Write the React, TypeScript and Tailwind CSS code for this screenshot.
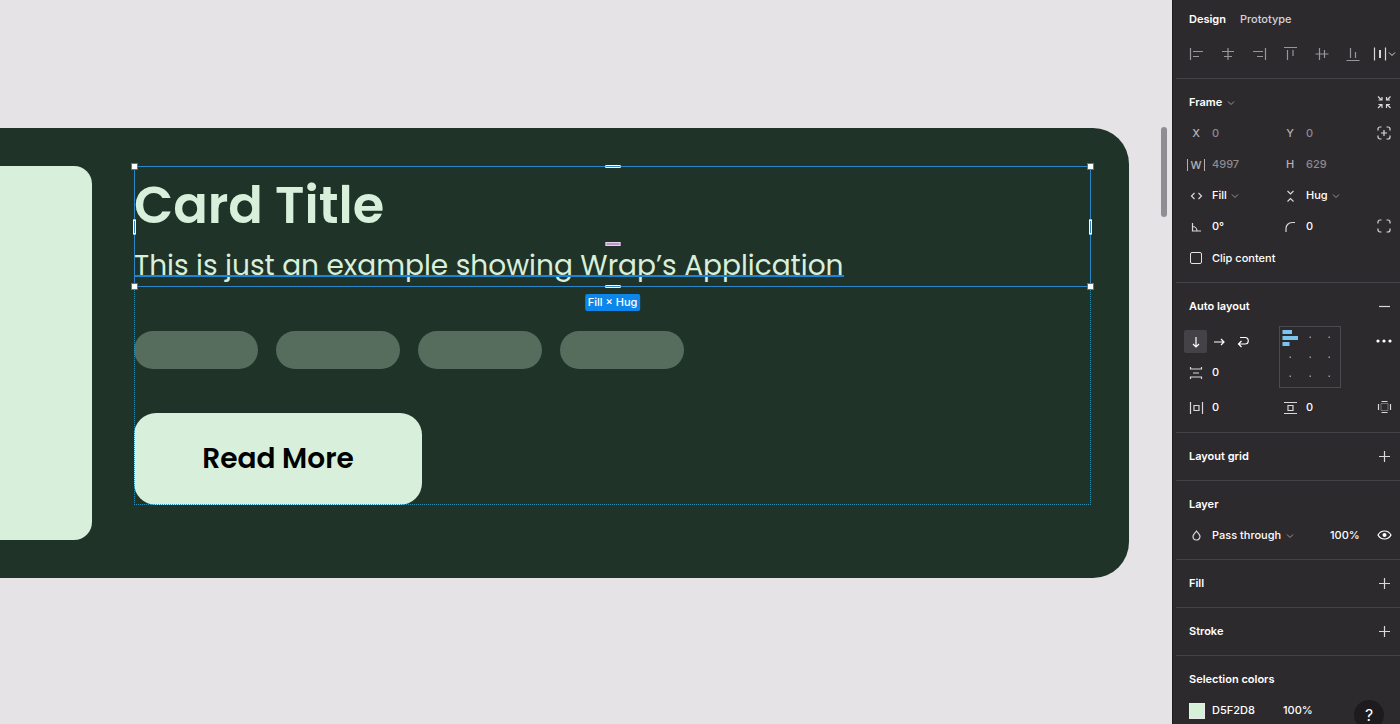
import type { ReactNode } from 'react';

interface IconProps {
  children: ReactNode;
  className?: string;
}

function Icon({ children, className = 'text-[#d9d7da]' }: IconProps) {
  return (
    <svg
      viewBox="0 0 16 16"
      width="16"
      height="16"
      fill="none"
      stroke="currentColor"
      strokeWidth="1.2"
      className={`shrink-0 ${className}`}
      aria-hidden="true"
    >
      {children}
    </svg>
  );
}

function Chevron({ className = 'text-[#98969a]' }: { className?: string }) {
  return (
    <svg
      viewBox="0 0 8 6"
      width="8"
      height="6"
      fill="none"
      stroke="currentColor"
      className={`shrink-0 pointer-events-none ${className}`}
      aria-hidden="true"
    >
      <path d="M1 1.5l3 3 3-3" />
    </svg>
  );
}

const alignments = [
  { label: 'Align left', path: 'M1.5 2v12M4 5.5h10M4 10.5h6' },
  { label: 'Align horizontal centers', path: 'M8 2v12M2 5.5h12M4 10.5h8' },
  { label: 'Align right', path: 'M14.5 2v12M2 5.5h10M6 10.5h6' },
  { label: 'Align top', path: 'M2 1.5h13M5.5 4v10M11 4v6' },
  { label: 'Align vertical centers', path: 'M1.500 8h13M5.500 2v12M10.500 4v8' },
  { label: 'Align bottom', path: 'M1.5 14.5h13M5.5 2v10M10.5 6v6' },
];

const brackets =
  'M2 5.5V4a2 2 0 0 1 2-2h1.5M10.5 2H12a2 2 0 0 1 2 2v1.5M14 10.5V12a2 2 0 0 1-2 2h-1.5M5.5 14H4a2 2 0 0 1-2-2v-1.5';

function Section({ children, className = 'pb-2' }: { children: ReactNode; className?: string }) {
  return (
    <section className={`border-b border-[#444246] pt-2 ${className}`}>
      {children}
    </section>
  );
}

function Row({ children }: { children: ReactNode }) {
  return <div className="grid grid-cols-[94px_1fr_32px] items-center pl-2">{children}</div>;
}

function Heading({ title, action }: { title: string; action?: ReactNode }) {
  return (
    <div className="flex h-[31px] items-center pl-[13px]">
      <h2 className="flex-1 font-semibold">{title}</h2>
      {action}
    </div>
  );
}

function IconButton({ label, children }: { label: string; children: ReactNode }) {
  return (
    <button type="button" aria-label={label} className="flex h-6 w-8 shrink-0 items-center justify-center pb-px">
      {children}
    </button>
  );
}

function AddButton({ label }: { label: string }) {
  return (
    <IconButton label={label}>
      <Icon>
        <path d="M8.5 3v11M3 8.5h11" />
      </Icon>
    </IconButton>
  );
}

interface FieldProps {
  label: string;
  icon: ReactNode;
  value: string;
  muted?: boolean;
}

function Field({ label, icon, value, muted }: FieldProps) {
  return (
    <label className="flex h-[31px] min-w-0 items-center gap-1">
      <span className="flex w-6 shrink-0 items-center justify-center text-[#b3b1b4]">{icon}</span>
      <input
        aria-label={label}
        defaultValue={value}
        className={`w-full min-w-0 bg-transparent outline-none ${muted ? 'text-[#8d8b8f]' : 'text-white'}`}
      />
    </label>
  );
}

function Dropdown({ label, icon, value }: Omit<FieldProps, 'muted'>) {
  return (
    <label className="flex h-[31px] flex-1 items-center gap-1">
      <span className="flex w-6 shrink-0 items-center justify-center">{icon}</span>
      <select aria-label={label} className="appearance-none bg-transparent outline-none">
        <option>{value}</option>
      </select>
      <Chevron />
    </label>
  );
}

function AlignmentGrid() {
  return (
    <svg viewBox="0 0 62 62" width="62" height="62" className="ml-px shrink-0" role="img" aria-label="Alignment">
      <rect x="0.5" y="0.5" width="61" height="61" fill="none" stroke="#4c4a4e" />
      {[11, 31, 50].map((y) =>
        [11, 31, 50].map((x) =>
          x === 11 && y === 11 ? null : (
            <rect key={`${x}-${y}`} x={x - 0.5} y={y - 0.5} width="1.5" height="1.5" fill="#98969a" />
          )
        )
      )}
      <path d="M3.5 4H13v4H3.5zM3.5 10H19v4H3.5zM3.5 16h7v4h-7z" fill="#7cc4f0" />
    </svg>
  );
}

function DesignPanel() {
  return (
    <aside className="relative w-[228px] shrink-0 overflow-hidden border-l border-[#1d1b1e] bg-[#2d2a2e] pl-[3px] font-['Inter',sans-serif] text-[11px] font-medium text-white">
      <div className="border-b border-[#444246] pb-2">
        <nav className="flex h-[38px] items-center gap-3.5 pl-[13px]">
          <a href="#design" className="font-semibold">Design</a>
          <a href="#prototype" className="text-[#d5d3d6]">Prototype</a>
        </nav>
        <div className="grid h-8 grid-cols-7 items-center pl-[5px]">
          {alignments.map((item) => (
            <button key={item.label} type="button" aria-label={item.label} className="flex justify-center">
              <Icon className="text-[#98969a]">
                <path d={item.path} />
              </Icon>
            </button>
          ))}
          <button type="button" aria-label="Distribute" className="flex items-center justify-center">
            <Icon>
              <path d="M2.5 1.5v13M13.5 1.5v13" />
              <path d="M8 4v8" strokeWidth="2" />
            </Icon>
            <Chevron className="text-[#d9d7da]" />
          </button>
        </div>
      </div>

      {/* Frame */}
      <Section className="pb-[9px]">
        <div className="flex h-[31px] items-center pl-[13px]">
          <select aria-label="Node type" className="appearance-none bg-transparent font-semibold outline-none">
            <option>Frame</option>
          </select>
          <span className="flex-1 pl-1">
            <Chevron />
          </span>
          <IconButton label="Resize to fit">
            <Icon>
              <path d="M2 2.500l3.500 3.500M6 3v3H2.500M14.500 2.500L11 6M10.500 3v3H14M2 14l3.500-3.500M6 14v-3.500H2.500M14.500 14L11 10.500M10.500 14v-3.500H14" />
            </Icon>
          </IconButton>
        </div>
        <Row>
          <Field label="X position" icon="X" value="0" muted />
          <Field label="Y position" icon="Y" value="0" muted />
          <IconButton label="Absolute position">
            <Icon>
              <path d={brackets} />
              <path d="M8 5v6M5 8h6" />
            </Icon>
          </IconButton>
        </Row>
        <Row>
          <Field
            label="Width"
            icon={<span className="border-x border-[#b3b1b4] px-0.5 leading-3">W</span>}
            value="4997"
            muted
          />
          <Field label="Height" icon="H" value="629" muted />
        </Row>
        <Row>
          <Dropdown
            label="Horizontal resizing"
            icon={<Icon><path d="M6.5 5l-3 3 3 3M10.5 5l3 3-3 3" /></Icon>}
            value="Fill"
          />
          <Dropdown
            label="Vertical resizing"
            icon={<Icon><path d="M5.5 3l3 3 3-3M5.5 13.5l3-3 3 3" /></Icon>}
            value="Hug"
          />
        </Row>
        <Row>
          <Field
            label="Rotation"
            icon={<Icon><path d="M4.5 4v8H13M4.5 7.5A4.500 4.500 0 0 1 9 12" /></Icon>}
            value="0°"
          />
          <Field
            label="Corner radius"
            icon={<Icon><path d="M4 13V9.5a6 6 0 0 1 6-6h3" /></Icon>}
            value="0"
          />
          <IconButton label="Independent corners">
            <Icon>
              <path d={brackets} />
            </Icon>
          </IconButton>
        </Row>
        <label className="flex h-[31px] items-center gap-1 pt-px pl-2">
          <span className="flex w-6 justify-center">
            <input type="checkbox" className="size-3 appearance-none rounded-xs border border-[#e3e1e4]" />
          </span>
          Clip content
        </label>
      </Section>

      {/* Auto layout */}
      <Section className="pb-[9px]">
        <Heading
          title="Auto layout"
          action={
            <IconButton label="Remove auto layout">
              <Icon><path d="M3 8.5h11" /></Icon>
            </IconButton>
          }
        />
        <div className="flex pt-1 pl-2">
          <div className="w-[94px]">
            <div className="flex h-[31px] items-center">
              <button type="button" aria-label="Vertical" className="flex size-[23px] items-center justify-center rounded-xs bg-[#444246]">
                <Icon className="text-white"><path d="M8 3v10M5 10l3 3 3-3" /></Icon>
              </button>
              <button type="button" aria-label="Horizontal" className="flex size-6 items-center justify-center">
                <Icon className="text-white"><path d="M3 8h10M10 5l3 3-3 3" /></Icon>
              </button>
              <button type="button" aria-label="Wrap" className="flex size-6 items-center justify-center">
                <Icon className="text-white"><path d="M5 3.5h5a3.250 3.250 0 0 1 0 6.500H3.500M6.500 7l-3 3 3 3" /></Icon>
              </button>
            </div>
            <Field
              label="Vertical gap"
              icon={<Icon><path d="M2.5 2v2h11V2M2.5 14v-2h11v2M5 8h6" /></Icon>}
              value="0"
            />
          </div>
          <AlignmentGrid />
          <div className="flex h-[31px] flex-1 items-center justify-end">
            <IconButton label="Advanced layout">
              <Icon className="text-white">
                <g fill="currentColor" stroke="none">
                  <circle cx="2" cy="8" r="1.6" />
                  <circle cx="8" cy="8" r="1.6" />
                  <circle cx="14" cy="8" r="1.6" />
                </g>
              </Icon>
            </IconButton>
          </div>
        </div>
        <div className="pt-1">
          <Row>
            <Field
              label="Horizontal padding"
              icon={<Icon><path d="M2.5 2v12M14.5 2v12M6 5.5h5v5H6z" /></Icon>}
              value="0"
            />
            <Field
              label="Vertical padding"
              icon={<Icon><path d="M2 2.5h13M2 13.5h13M6 5.5h5v5H6z" /></Icon>}
              value="0"
            />
            <IconButton label="Individual padding">
              <Icon>
                <path d="M5.5 2.5h6M5.5 13.5h6M2.5 5v6M14.5 5v6" />
                <path d="M5 4.5h7v7H5z" strokeWidth="1" opacity="0.4" />
              </Icon>
            </IconButton>
          </Row>
        </div>
      </Section>

      <Section>
        <Heading title="Layout grid" action={<AddButton label="Add layout grid" />} />
      </Section>

      {/* Layer */}
      <Section>
        <Heading title="Layer" />
        <div className="flex items-center pl-2">
          <Dropdown
            label="Blend mode"
            icon={<Icon><path d="M8.5 3c1.500 2 3.500 3.500 3.500 5.500a3.500 3.500 0 0 1-7 0c0-2 2-3.500 3.500-5.500z" /></Icon>}
            value="Pass through"
          />
          <input aria-label="Layer opacity" defaultValue="100%" className="w-[38px] bg-transparent outline-none" />
          <IconButton label="Toggle visibility">
            <Icon className="text-white">
              <path d="M2 8c1.5-2.7 3.8-4 6.500-4s5 1.300 6.500 4c-1.500 2.700-3.800 4-6.500 4s-5-1.300-6.500-4z" />
              <circle cx="8.5" cy="8" r="2" fill="currentColor" stroke="none" />
            </Icon>
          </IconButton>
        </div>
      </Section>

      <Section>
        <Heading title="Fill" action={<AddButton label="Add fill" />} />
      </Section>
      <Section>
        <Heading title="Stroke" action={<AddButton label="Add stroke" />} />
      </Section>

      {/* Selection colors */}
      <Section>
        <Heading title="Selection colors" />
        <div className="flex h-[31px] items-center gap-[7px] pl-[13px]">
          <button type="button" aria-label="Edit color" className="size-4 border border-[#eceaed] bg-[#d5f2d8]" />
          <input aria-label="Hex color" defaultValue="D5F2D8" className="w-16 bg-transparent outline-none" />
          <input aria-label="Color opacity" defaultValue="100%" className="w-10 bg-transparent outline-none" />
        </div>
      </Section>

      <button
        type="button"
        aria-label="Help"
        className="absolute right-4 -bottom-1.5 flex size-[30px] items-center justify-center rounded-full bg-[#1d1b1e] text-base font-normal"
      >
        ?
      </button>
    </aside>
  );
}

const corners = [
  '-top-1 -left-1',
  '-top-1 -right-1',
  '-bottom-1 -left-1',
  '-bottom-1 -right-1',
];

const edges = [
  '-top-0.5 left-1/2 h-[3px] w-[15px] -translate-x-1/2',
  '-bottom-0.5 left-1/2 h-[3px] w-[15px] -translate-x-1/2',
  '-left-0.5 top-1/2 h-[15px] w-[3px] -translate-y-1/2',
  '-right-0.5 top-1/2 h-[15px] w-[3px] -translate-y-1/2',
];

function SelectionOverlay() {
  return (
    <div className="pointer-events-none absolute inset-0 border border-[#2a86c8]">
      {edges.map((position) => (
        <span key={position} className={`absolute border border-white bg-[#2a86c8] ${position}`} />
      ))}
      {corners.map((position) => (
        <span key={position} className={`absolute size-[7px] border border-[#1a86d9] bg-white ${position}`} />
      ))}
      <span className="absolute top-[75px] left-1/2 h-1 w-[15px] -translate-x-1/2 border border-[#e6d3ea] bg-[#c490d0]" />
      <span className="absolute top-full left-1/2 mt-2 -translate-x-1/2 rounded-xs bg-[#0d86ea] px-[3px] font-['Inter',sans-serif] text-[11px] leading-[17px] font-medium whitespace-nowrap text-white">
        Fill × Hug
      </span>
    </div>
  );
}

function CardPreview() {
  return (
    <article className="flex gap-[42px] rounded-r-[36px] bg-[#203328] py-[38px] pr-[38px] font-['Poppins','Inter',sans-serif]">
      <div className="h-[374px] w-[92px] shrink-0 rounded-r-[18px] bg-[#d8efdb]" />
      <div className="relative flex flex-1 flex-col gap-11 self-start">
        <div className="relative z-10">
          <h1 className="text-[51px] leading-[78px] font-semibold text-[#d8efdb]">Card Title</h1>
          <p className="text-[28px] leading-[43px] font-normal text-[#d8efdb]">
            <span className="relative">
              This is just an example showing Wrap’s Application
              <span className="absolute inset-x-0 bottom-2 h-0.5 bg-[#1a86d9]" />
            </span>
          </p>
          <SelectionOverlay />
        </div>
        <div className="flex gap-[18px]">
          {[0, 1, 2, 3].map((tag) => (
            <div key={tag} className="h-[38px] w-[124px] rounded-full bg-[#566c5d]" />
          ))}
        </div>
        <button type="button" className="h-[92px] w-[288px] rounded-[22px] bg-[#d8efdb] text-[28px] font-semibold text-black">
          Read More
        </button>
        <div className="pointer-events-none absolute inset-0 border border-dotted border-[#2f8fae]" />
      </div>
    </article>
  );
}

export default function App() {
  return (
    <div className="flex h-screen overflow-hidden bg-[#e5e3e6]">
      <main className="relative min-w-0 flex-1 pt-32 pr-[43px]">
        <CardPreview />
        <div className="absolute top-[127px] right-[5px] h-[90px] w-1.5 rounded-full bg-[#8f8d91]" />
      </main>
      <DesignPanel />
    </div>
  );
}
